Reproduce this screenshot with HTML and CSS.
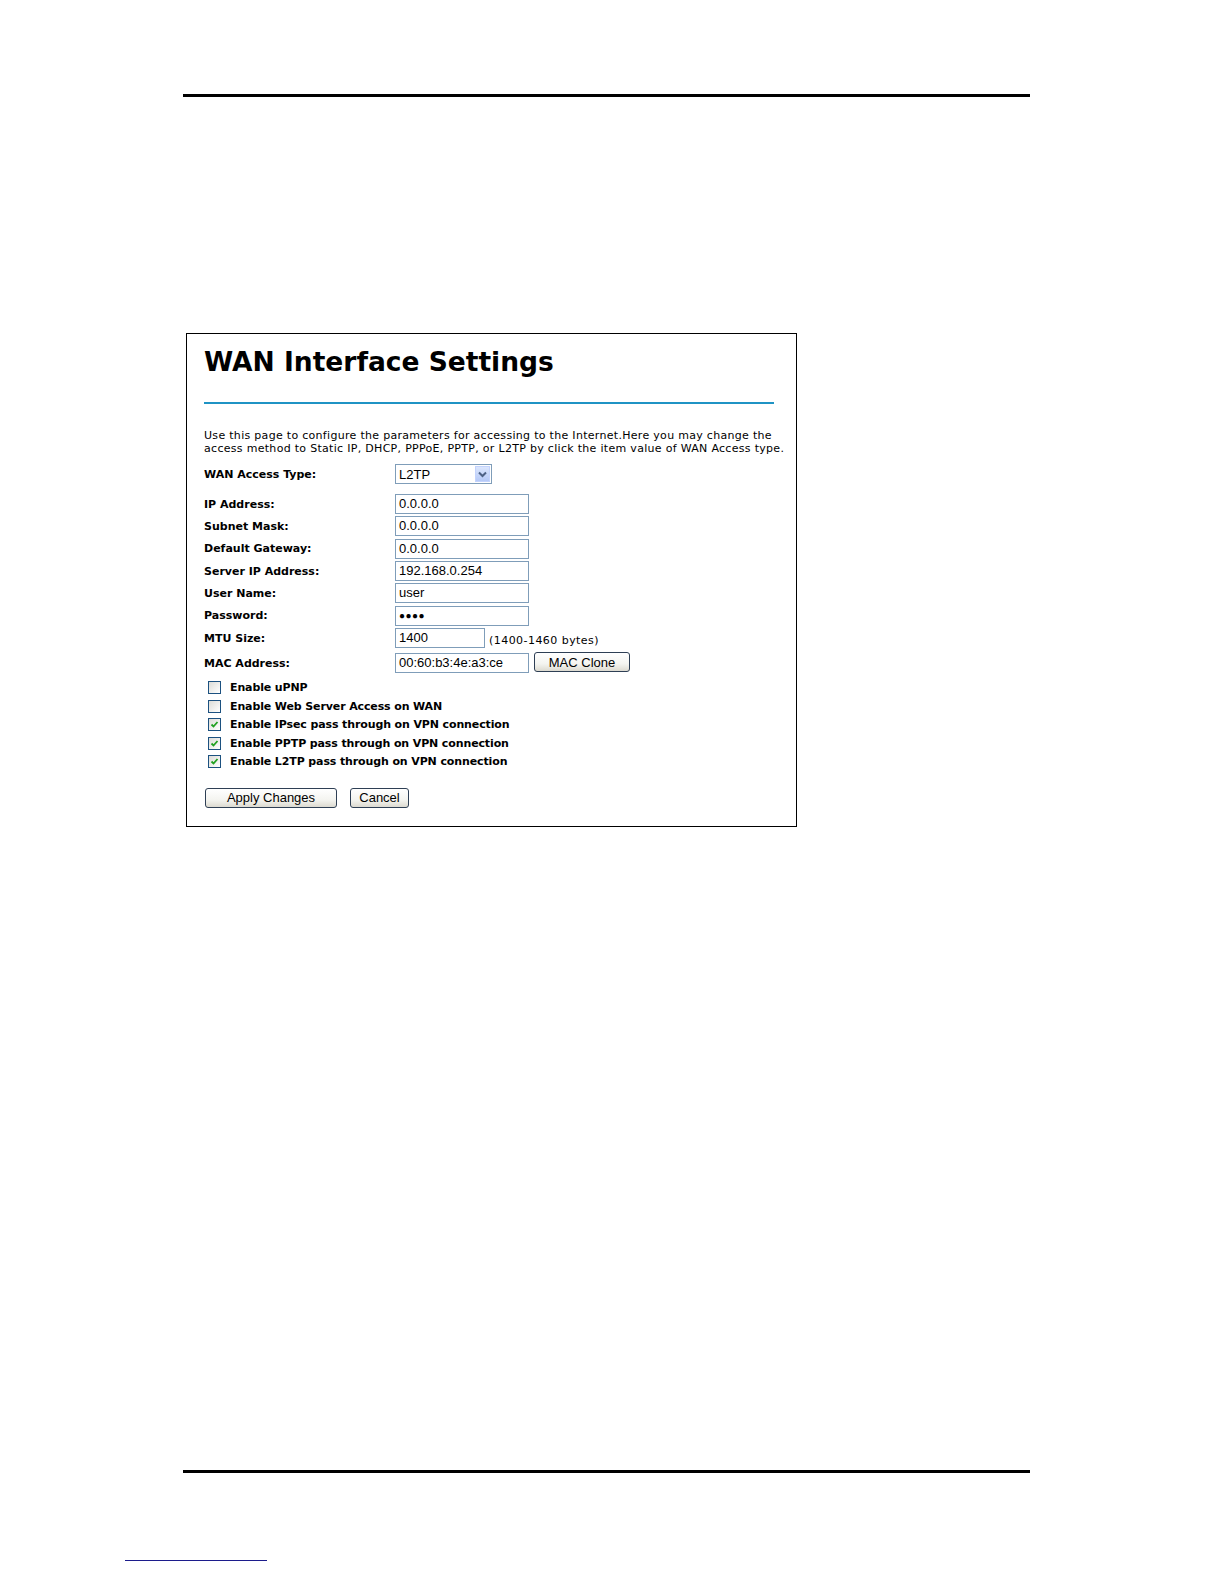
FILE: index.html
```html
<!DOCTYPE html>
<html>
<head>
<meta charset="utf-8">
<title>WAN Interface Settings</title>
<link rel="stylesheet" href="styles.css">
</head>
<body>
<div class="page">
  <div class="rule top-rule"></div>
  <div class="frame">
    <h1 class="title">WAN Interface Settings</h1>
    <div class="title-line"></div>
    <p class="desc">Use this page to configure the parameters for accessing to the Internet.Here you may change the access method to Static IP, DHCP, PPPoE, PPTP, or L2TP by click the item value of WAN Access type.</p>
    <div class="row row-type">
      <span class="label">WAN Access Type:</span>
      <div class="select"><span class="select-text">L2TP</span><span class="select-btn"><svg width="9" height="7" viewBox="0 0 9 7"><path d="M1 1.5 L4.5 5 L8 1.5" fill="none" stroke="#4d6185" stroke-width="2"/></svg></span></div>
    </div>
    <div class="fields">
      <div class="row"><span class="label">IP Address:</span><span class="input">0.0.0.0</span></div>
      <div class="row"><span class="label">Subnet Mask:</span><span class="input">0.0.0.0</span></div>
      <div class="row"><span class="label">Default Gateway:</span><span class="input">0.0.0.0</span></div>
      <div class="row"><span class="label">Server IP Address:</span><span class="input">192.168.0.254</span></div>
      <div class="row"><span class="label">User Name:</span><span class="input">user</span></div>
      <div class="row"><span class="label">Password:</span><span class="input pw">&#9679;&#9679;&#9679;&#9679;</span></div>
      <div class="row"><span class="label">MTU Size:</span><span class="input short">1400</span><span class="hint">(1400-1460 bytes)</span></div>
      <div class="row row-mac"><span class="label">MAC Address:</span><span class="input">00:60:b3:4e:a3:ce</span><span class="btn btn-clone">MAC Clone</span></div>
    </div>
    <div class="checks">
      <div class="check"><span class="box"></span><span class="check-label">Enable uPNP</span></div>
      <div class="check"><span class="box"></span><span class="check-label">Enable Web Server Access on WAN</span></div>
      <div class="check"><span class="box on"><svg width="9" height="9" viewBox="0 0 9 9"><path d="M1.5 4.5 L3.5 6.5 L7.5 2" fill="none" stroke="#21a121" stroke-width="1.8"/></svg></span><span class="check-label">Enable IPsec pass through on VPN connection</span></div>
      <div class="check"><span class="box on"><svg width="9" height="9" viewBox="0 0 9 9"><path d="M1.5 4.5 L3.5 6.5 L7.5 2" fill="none" stroke="#21a121" stroke-width="1.8"/></svg></span><span class="check-label">Enable PPTP pass through on VPN connection</span></div>
      <div class="check"><span class="box on"><svg width="9" height="9" viewBox="0 0 9 9"><path d="M1.5 4.5 L3.5 6.5 L7.5 2" fill="none" stroke="#21a121" stroke-width="1.8"/></svg></span><span class="check-label">Enable L2TP pass through on VPN connection</span></div>
    </div>
    <div class="actions">
      <span class="btn btn-apply">Apply Changes</span>
      <span class="btn btn-cancel">Cancel</span>
    </div>
  </div>
  <div class="rule bottom-rule"></div>
  <div class="footnote-line"></div>
</div>
</body>
</html>
```

FILE: styles.css
```css
html, body {
  margin: 0;
  padding: 0;
  background: #ffffff;
}

.page {
  width: 1224px;
  height: 1584px;
  position: relative;
  overflow: hidden;
  font-family: "DejaVu Sans", Verdana, sans-serif;
  color: #000;
}

.rule {
  margin-left: 183px;
  width: 847px;
  height: 3px;
  background: #000;
}

.top-rule {
  margin-top: 94px;
}

.frame {
  box-sizing: border-box;
  margin-top: 236px;
  margin-left: 186px;
  width: 611px;
  height: 494px;
  border: 1px solid #000;
  padding: 0 0 0 17px;
}

.title {
  margin: 12px 0 0 0;
  font-family: "DejaVu Sans", Verdana, sans-serif;
  font-weight: bold;
  font-size: 26.5px;
  line-height: 32px;
  letter-spacing: 0;
  white-space: nowrap;
}

.title-line {
  margin-top: 24px;
  width: 570px;
  height: 2px;
  background: #1f93c4;
}

.desc {
  margin: 25px 0 0 0;
  font-size: 11px;
  line-height: 13px;
  width: 585px;
  letter-spacing: 0.3px;
}

.row {
  display: flex;
  align-items: center;
  height: 20px;
}

.row-type {
  margin-top: 9px;
}

.label {
  width: 191px;
  flex: none;
  font-weight: bold;
  font-size: 11px;
  white-space: nowrap;
}

.select {
  box-sizing: border-box;
  width: 97px;
  height: 20px;
  border: 1px solid #7f9db9;
  display: flex;
  align-items: center;
  justify-content: space-between;
  padding: 0 1px 0 3px;
}

.select-text {
  font-family: "Liberation Sans", Arial, sans-serif;
  font-size: 13px;
}

.select-btn {
  width: 15px;
  height: 16px;
  background: linear-gradient(#dbe6fd, #b5c9f7);
  border: 1px solid #c3d3fd;
  box-sizing: border-box;
  display: flex;
  align-items: center;
  justify-content: center;
}

.fields {
  margin-top: 10px;
  display: flex;
  flex-direction: column;
  gap: 2.35px;
}

.input {
  box-sizing: border-box;
  width: 134px;
  height: 20px;
  border: 1px solid #7f9db9;
  padding: 0 3px;
  font-family: "Liberation Sans", Arial, sans-serif;
  font-size: 13px;
  line-height: 18px;
  white-space: nowrap;
}

.input.short {
  width: 90px;
}

.input.pw {
  font-size: 10px;
  letter-spacing: 0.5px;
}

.hint {
  margin-left: 4px;
  margin-top: 4px;
  font-size: 11px;
  letter-spacing: 0.45px;
}

.row-mac {
  margin-top: 3px;
}

.btn {
  box-sizing: border-box;
  display: inline-flex;
  align-items: center;
  justify-content: center;
  height: 20px;
  border: 1px solid #2e3f55;
  border-radius: 3px;
  background: linear-gradient(#ffffff, #f4f4f0 60%, #dcdad0);
  font-family: "Liberation Sans", Arial, sans-serif;
  font-size: 13px;
}

.btn-clone {
  width: 96px;
  margin-left: 5px;
  margin-top: -2px;
}

.checks {
  margin-top: 5px;
  display: flex;
  flex-direction: column;
}

.check {
  display: flex;
  align-items: center;
  height: 18.5px;
}

.box {
  box-sizing: border-box;
  width: 13px;
  height: 13px;
  margin-left: 4px;
  border: 1px solid #1c5180;
  background: linear-gradient(135deg, #dcdcd7, #ffffff);
  display: flex;
  align-items: center;
  justify-content: center;
}

.check-label {
  margin-left: 9px;
  font-weight: bold;
  font-size: 11px;
  letter-spacing: -0.12px;
  white-space: nowrap;
}

.actions {
  margin-top: 17px;
  display: flex;
  gap: 13px;
}

.btn-apply {
  width: 132px;
  margin-left: 1px;
}

.btn-cancel {
  width: 59px;
}

.bottom-rule {
  margin-top: 643px;
}

.footnote-line {
  margin-top: 87px;
  margin-left: 125px;
  width: 142px;
  height: 1px;
  background: #1c1c8c;
}
```
